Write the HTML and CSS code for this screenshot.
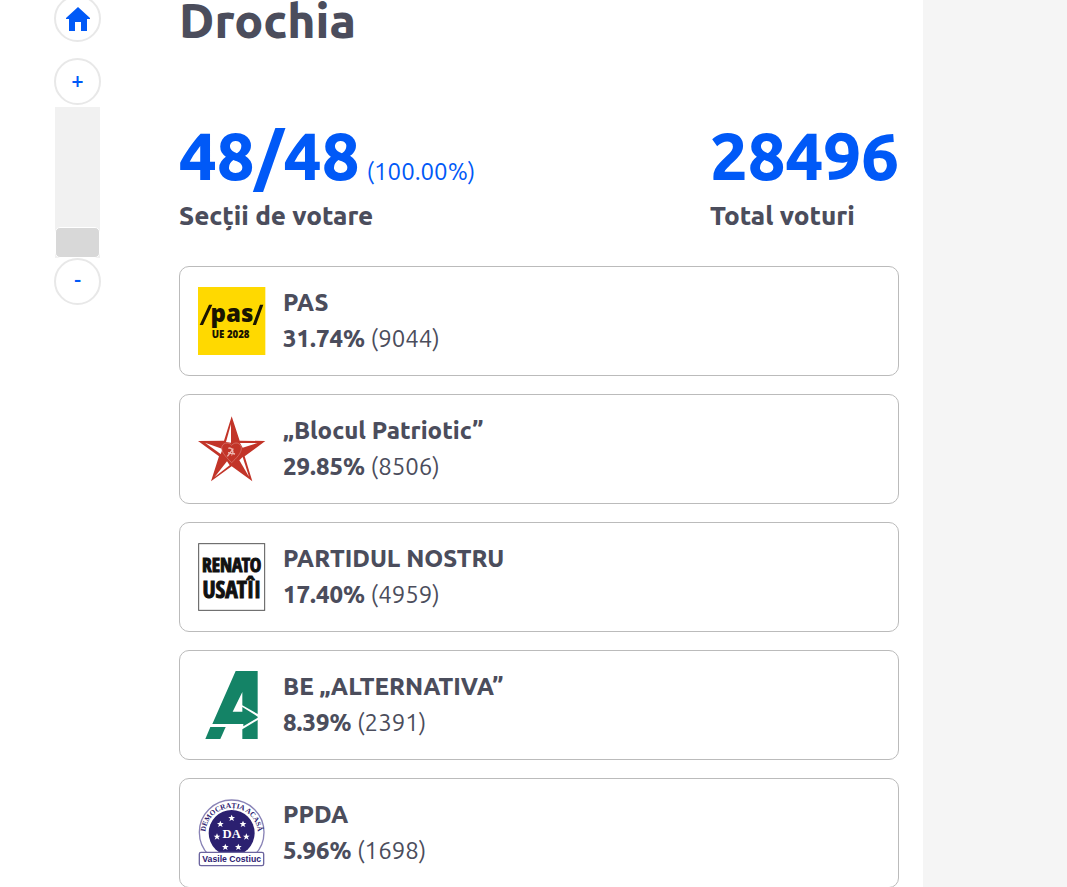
FILE: index.html
```
<!DOCTYPE html>
<html lang="ro">

<head>
    <meta charset="UTF-8">
    <meta name="viewport" content="width=device-width, initial-scale=1.0">
    <title>Drochia</title>
    <link rel="stylesheet" href="styles.css">
</head>

<body>

    <div class="page">

        <!-- Map zoom controls -->
        <div class="map-controls">
            <button class="round-btn home-btn" aria-label="Acasă">
                <svg viewBox="0 0 24 24" width="24" height="24"><path fill="currentColor" d="M12 0L0 11v1h3v12h6v-9h6v9h6V12h3v-1z"/></svg>
            </button>
            <button class="round-btn">+</button>
            <input class="zoom-slider" type="range" min="0" max="10" value="0" aria-label="Zoom">
            <button class="round-btn">-</button>
        </div>

        <!-- Results -->
        <main class="results">
            <h1>Drochia</h1>

            <div class="stats">
                <div class="stat">
                    <div class="stat-value">48/48 <span class="stat-percent">(100.00%)</span></div>
                    <div class="stat-label">Secții de votare</div>
                </div>
                <div class="stat">
                    <div class="stat-value">28496</div>
                    <div class="stat-label">Total voturi</div>
                </div>
            </div>

            <div class="parties">
                <div class="party">
                    <svg class="logo" viewBox="24 21 204 204">
                        <rect x="24" y="21" width="202" height="204" fill="#ffd900"/>
                        <g fill="#1a1400">
                            <path d="M29 135L57 74H67L39 135zM188 135L210 74H220L198 135z"/>
                            <text class="logo-sans" x="126" y="126" font-size="72" text-anchor="middle">pas</text>
                            <text class="logo-sans" x="122" y="174" font-size="29" text-anchor="middle">UE 2028</text>
                        </g>
                    </svg>
                    <div>
                        <div class="party-name">PAS</div>
                        <div class="party-votes"><b>31.74%</b> (9044)</div>
                    </div>
                </div>

                <div class="party">
                    <svg class="logo" viewBox="24 21 204 204">
                        <path fill="#c23428" d="M125 25L149 98L226 99L164 145L187 220L125 175L63 220L87 145L24 99L102 98z"/>
                        <g fill="#fff">
                            <path d="M123 48V104L108 102z"/>
                            <path d="M150 105H202L158 119z"/>
                            <path d="M158 147L177 206L148 157z"/>
                            <path d="M119 172L74 207L111 160z"/>
                            <path d="M92 138L45 104L98 123z"/>
                        </g>
                        <path fill="#c23428" stroke="#d98078" stroke-width="2" d="M125 112C116 100 96 104 95 120C95 136 113 151 125 164C138 151 155 136 154 120C153 104 134 100 125 112z"/>
                        <path fill="none" stroke="#efb9b3" stroke-width="4" d="M115 121C126 116 134 133 124 142M114 134L135 138M112 145L130 122"/>
                    </svg>
                    <div>
                        <div class="party-name">„Blocul Patriotic”</div>
                        <div class="party-votes"><b>29.85%</b> (8506)</div>
                    </div>
                </div>

                <div class="party">
                    <svg class="logo" viewBox="24 21 204 204">
                        <rect x="26" y="23" width="198" height="200" fill="#fff" stroke="#555" stroke-width="3"/>
                        <g class="logo-narrow" fill="#111" stroke="#111" stroke-width="3" text-anchor="middle">
                            <text x="125" y="109" font-size="58">RENATO</text>
                            <text x="125" y="186" font-size="70">USATÎI</text>
                        </g>
                    </svg>
                    <div>
                        <div class="party-name">PARTIDUL NOSTRU</div>
                        <div class="party-votes"><b>17.40%</b> (4959)</div>
                    </div>
                </div>

                <div class="party">
                    <svg class="logo" viewBox="24 21 204 204">
                        <g fill="#148366">
                            <path d="M137 21H203V150L157 124V84L128 143H157V129L203 158V161L160 187V180H67z"/>
                            <path d="M61 189H107L91 225H46z"/>
                            <path d="M157 196L203 168V225H157z"/>
                        </g>
                    </svg>
                    <div>
                        <div class="party-name">BE „ALTERNATIVA”</div>
                        <div class="party-votes"><b>8.39%</b> (2391)</div>
                    </div>
                </div>

                <div class="party">
                    <svg class="logo" viewBox="24 27 204 204">
                        <defs>
                            <path id="seal-arc" d="M48 150A79 79 0 1 1 202 150"/>
                            <path id="seal-star" d="M0 -10L3 -3H10L4 2L7 9L0 5L-7 9L-4 2L-10 -3H-3z"/>
                        </defs>
                        <circle cx="125" cy="127" r="97" fill="#fff" stroke="#8983b6" stroke-width="4"/>
                        <circle cx="125" cy="129" r="69" fill="#2b2070"/>
                        <text class="logo-serif" font-size="22" fill="#2b2070" text-anchor="middle"><textPath href="#seal-arc" startOffset="50%">DEMOCRAȚIA ACASĂ</textPath></text>
                        <g fill="#fff">
                            <use href="#seal-star" x="125" y="84"/>
                            <use href="#seal-star" x="91" y="102"/>
                            <use href="#seal-star" x="159" y="102"/>
                            <use href="#seal-star" x="81" y="140"/>
                            <use href="#seal-star" x="169" y="140"/>
                            <use href="#seal-star" x="106" y="171"/>
                            <use href="#seal-star" x="145" y="171"/>
                            <text class="logo-serif" x="125" y="145" font-size="38" text-anchor="middle">DA</text>
                        </g>
                        <rect x="28" y="187" width="193" height="40" rx="5" fill="#fff" stroke="#6c659f" stroke-width="4"/>
                        <text class="logo-arial" x="125" y="216" font-size="26" fill="#2b2070" text-anchor="middle">Vasile Costiuc</text>
                    </svg>
                    <div>
                        <div class="party-name">PPDA</div>
                        <div class="party-votes"><b>5.96%</b> (1698)</div>
                    </div>
                </div>
            </div>
        </main>

    </div>

</body>

</html>
```
FILE: styles.css
```
* {
    box-sizing: border-box;
}

body {
    margin: 0;
    background-color: #f5f5f5;
    color: #4b4d5c;
    font-family: Ubuntu, 'Noto Sans', sans-serif;
    font-size: 24px;
}

.page {
    display: flex;
    min-height: 100vh;
    margin-right: 144px;
    padding-right: 24px;
    background-color: #fff;
}

/* Map zoom controls */
.map-controls {
    display: flex;
    flex-direction: column;
    align-items: center;
    flex: none;
    width: 125px;
    margin-top: -5px;
    margin-right: 54px;
    padding-left: 30px;
}

.round-btn {
    display: flex;
    justify-content: center;
    align-items: center;
    width: 47px;
    height: 47px;
    padding: 0 0 4px;
    border: 2px solid #e8e8e8;
    border-radius: 50%;
    background: #fff;
    color: #0059f7;
    font-family: inherit;
    font-size: 22px;
    font-weight: 500;
    line-height: 1;
    cursor: pointer;
}

.home-btn {
    margin-bottom: 16px;
    padding: 0;
}

.zoom-slider {
    appearance: none;
    writing-mode: vertical-lr;
    direction: rtl;
    width: 45px;
    height: 151px;
    margin: 2px 0 0;
    background: #f1f1f1;
}

.zoom-slider::-webkit-slider-thumb {
    appearance: none;
    width: 45px;
    height: 31px;
    border: 1px solid #fff;
    border-radius: 5px;
    background: #d8d8d8;
}

/* Results */
.results {
    flex: 1;
}

h1 {
    margin: 0 0 72px;
    font-size: 48px;
    font-weight: 800;
    line-height: 41px;
}

.stats {
    display: flex;
    justify-content: space-between;
    margin-bottom: 33px;
}

.stat-value {
    color: #0059f7;
    font-size: 67px;
    font-weight: 800;
    line-height: 86px;
}

.stat-percent {
    margin-left: -9px;
    font-size: 24px;
    font-weight: normal;
    line-height: 1;
}

.stat-label {
    font-size: 26px;
    font-weight: 800;
    line-height: 34px;
}

.parties {
    display: flex;
    flex-direction: column;
    gap: 18px;
}

.party {
    display: flex;
    align-items: center;
    gap: 17px;
    padding: 18px;
    border: 1px solid #bbb;
    border-radius: 10px;
    line-height: 36px;
}

.party-name,
.party-votes b {
    font-weight: 800;
}

/* Logos */
.logo {
    flex: none;
    width: 68px;
    height: 68px;
}

.logo-sans {
    font-family: 'Open Sans', sans-serif;
    font-weight: 800;
}

.logo-narrow {
    font-family: 'Open Sans Condensed', 'DejaVu Sans Condensed', 'Liberation Sans', sans-serif;
    font-weight: bold;
}

.logo-serif {
    font-family: 'Liberation Serif', serif;
    font-weight: bold;
}

.logo-arial {
    font-family: 'Liberation Sans', sans-serif;
    font-weight: bold;
}
```
